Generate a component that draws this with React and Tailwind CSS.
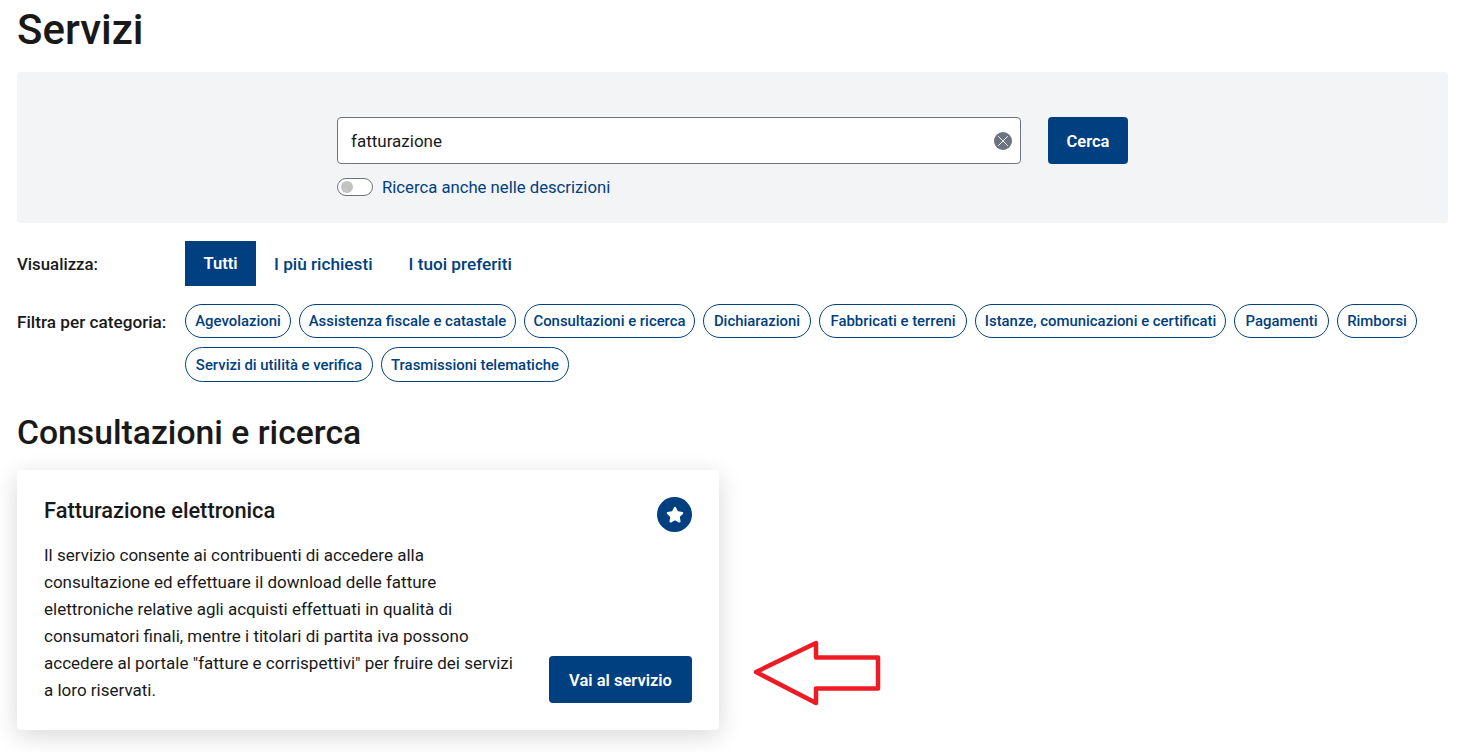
import React from 'react';
import { X, Star } from 'lucide-react';

const categories = [
  { label: 'Agevolazioni', size: 'w-[106px] h-[34px]' },
  { label: 'Assistenza fiscale e catastale', size: 'w-[217px] h-[34px]' },
  { label: 'Consultazioni e ricerca', size: 'w-[171px] h-[34px]' },
  { label: 'Dichiarazioni', size: 'w-[108px] h-[34px]' },
  { label: 'Fabbricati e terreni', size: 'w-[148px] h-[34px]' },
  { label: 'Istanze, comunicazioni e certificati', size: 'w-[251px] h-[34px]' },
  { label: 'Pagamenti', size: 'w-[95px] h-[34px]' },
  { label: 'Rimborsi', size: 'w-[80px] h-[34px]' },
  { label: 'Servizi di utilità e verifica', size: 'w-[188px] h-[35px]' },
  { label: 'Trasmissioni telematiche', size: 'w-[188px] h-[35px]' },
];

const App = () => {
  return (
    <div className="relative h-[752px] w-[1482px] overflow-hidden bg-white pl-[17px] pr-[34px] font-['Roboto',sans-serif] text-[#19191a]">
      <h1 className="h-[72px] pt-[5px] text-[42px] leading-[50px] font-medium">Servizi</h1>

      <div className="h-[151px] rounded-[4px] bg-[#f3f4f6] pl-[320px] pt-[45px]">
        <div className="flex items-start">
          <div className="flex h-[47px] w-[684px] items-center justify-between rounded-[4px] border border-[#6b7280] bg-white pl-[13px] pr-[8px]">
            <span className="pt-[2px] text-[17px]">fatturazione</span>
            <span className="flex h-[18px] w-[18px] items-center justify-center rounded-full bg-[#6b7280]">
              <X size={18} color="#ffffff" strokeWidth={1.3} />
            </span>
          </div>
          <button className="ml-[27px] h-[47px] w-[80px] rounded-[4px] bg-[#004080] pt-[3px] text-[16.5px] font-semibold text-white">Cerca</button>
        </div>
        <div className="mt-[14px] flex h-[18px] items-center">
          <span className="flex h-[18px] w-[36px] items-center rounded-full border border-[#6b7280] bg-white pl-[3px]">
            <span className="h-[12px] w-[12px] rounded-full bg-[#c2c2c2]"></span>
          </span>
          <span className="ml-[9px] pt-[2px] text-[16.7px] text-[#004080]">Ricerca anche nelle descrizioni</span>
        </div>
      </div>

      <div className="mt-[18px] flex h-[45px] items-center">
        <span className="w-[168px] pt-[2px] text-[16.8px] font-medium">Visualizza:</span>
        <span className="flex h-[45px] w-[71px] items-center justify-center bg-[#004080] pt-[2px] text-[16.5px] font-semibold text-white">Tutti</span>
        <span className="ml-[18px] pt-[2px] text-[17.2px] font-medium text-[#004080]">I più richiesti</span>
        <span className="ml-[36px] pt-[2px] text-[17.2px] font-medium text-[#004080]">I tuoi preferiti</span>
      </div>

      <div className="mt-[18px] flex">
        <span className="w-[168px] shrink-0 pt-[8px] text-[17.2px] leading-[20px] font-medium">Filtra per categoria:</span>
        <div className="flex flex-wrap gap-x-[8px] gap-y-[9px]">
          {categories.map((c) => (
            <span key={c.label} className={`flex items-center justify-center rounded-full border border-[#004080] pt-[1px] text-[14.9px] font-medium whitespace-nowrap text-[#004080] ${c.size}`}>{c.label}</span>
          ))}
        </div>
      </div>

      <h2 className="mt-[29px] text-[33.7px] leading-[44px] font-medium">Consultazioni e ricerca</h2>

      <div className="mt-[15px] flex h-[260px] w-[702px] justify-between rounded-[4px] bg-white pl-[27px] pr-[27px] shadow-[0_6px_24px_rgba(0,0,0,0.16)]">
        <div className="w-[480px] pt-[27px]">
          <h3 className="text-[21.8px] leading-[28px] font-medium">Fatturazione elettronica</h3>
          <p className="mt-[17px] text-[17px] leading-[27px]">
            Il servizio consente ai contribuenti di accedere alla<br />
            consultazione ed effettuare il download delle fatture<br />
            elettroniche relative agli acquisti effettuati in qualità di<br />
            consumatori finali, mentre i titolari di partita iva possono<br />
            accedere al portale "fatture e corrispettivi" per fruire dei servizi<br />
            a loro riservati.
          </p>
        </div>
        <div className="flex flex-col items-end justify-between pb-[27px] pt-[27px]">
          <span className="flex h-[35px] w-[35px] items-center justify-center rounded-full bg-[#004080]">
            <Star size={18} color="#ffffff" fill="#ffffff" />
          </span>
          <button className="h-[47px] w-[143px] rounded-[4px] bg-[#004080] pt-[3px] text-[16.5px] font-semibold text-white">Vai al servizio</button>
        </div>
      </div>

      <svg className="absolute left-[750px] top-[638px]" width="134" height="72" viewBox="0 0 134 72" fill="none">
        <path d="M6 34 L66 5 V19.5 H128 V50.5 H66 V65 Z" stroke="#ed1c24" strokeWidth="4.5" strokeLinejoin="round" />
      </svg>
    </div>
  );
};

export default App;
